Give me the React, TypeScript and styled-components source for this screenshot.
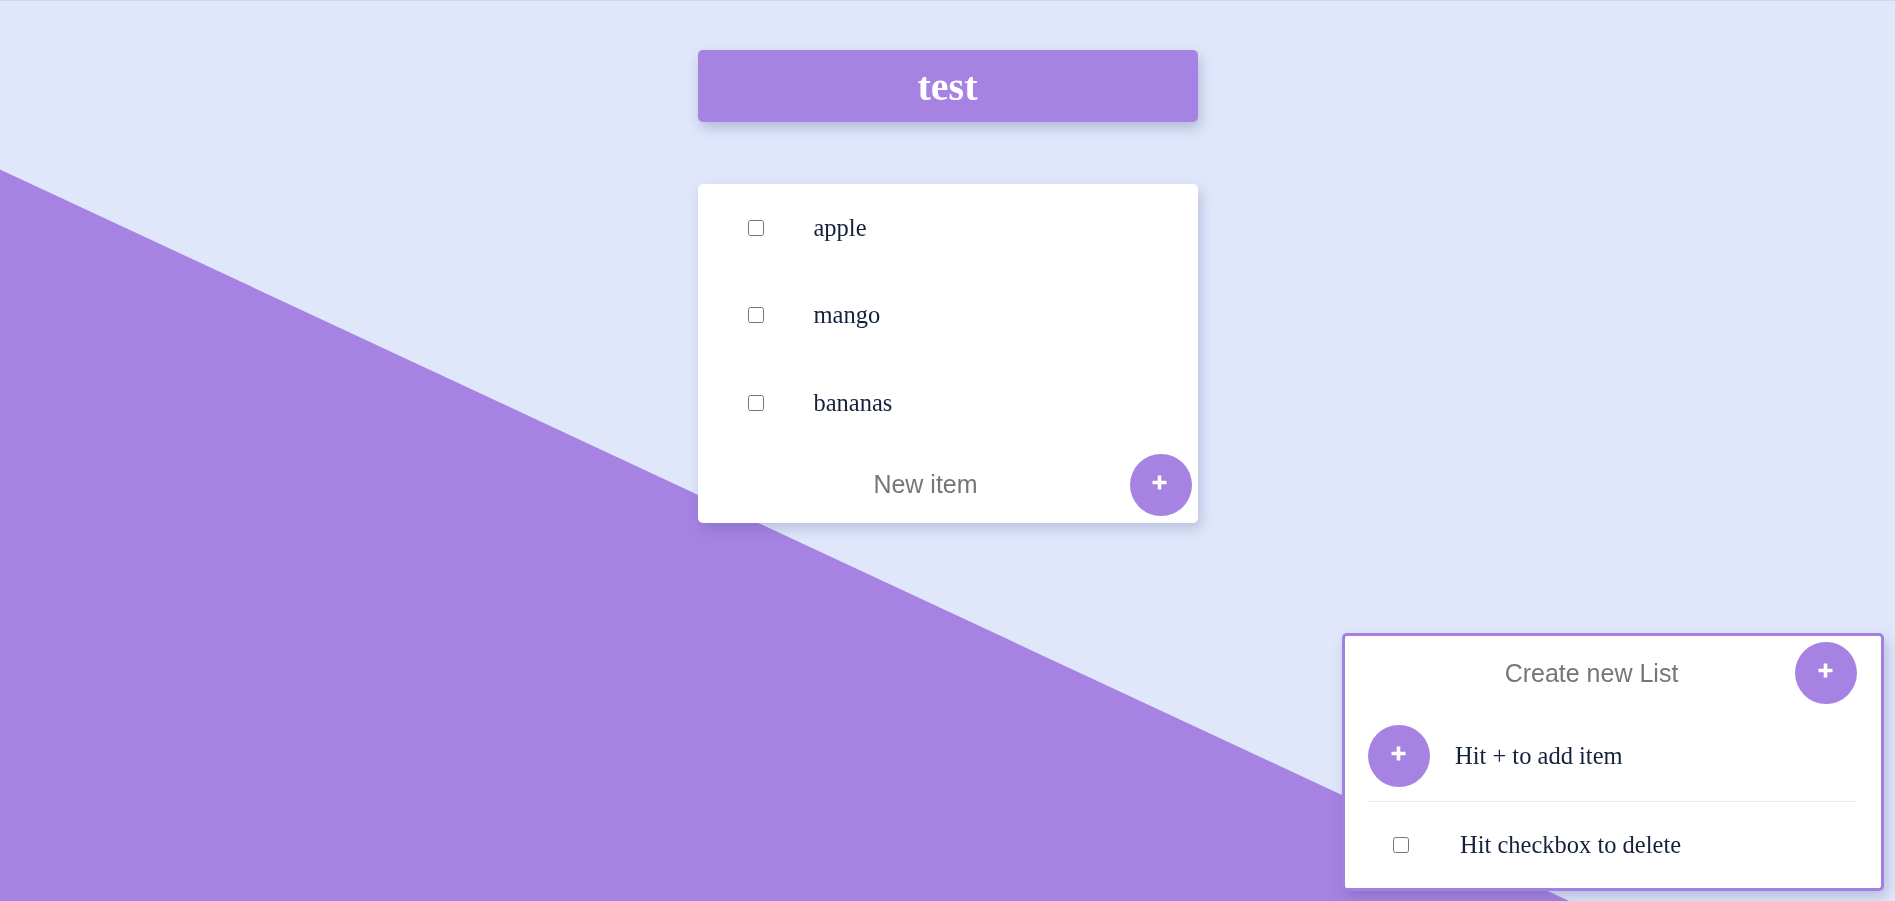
import React from "react";
import styled, { createGlobalStyle } from "styled-components";

const GlobalStyle = createGlobalStyle`
  html, body { margin: 0; padding: 0; }
  body {
    background: #e1e7fb;
    font-family: "Liberation Serif", "Times New Roman", serif;
    color: #14213d;
    overflow: hidden;
  }
  * { box-sizing: border-box; }
`;

const Page = styled.div`
  position: relative;
  min-height: 100vh;
  border-top: 1px solid #cfd6ee;
`;

const Diagonal = styled.div`
  position: fixed;
  inset: 0;
  background: #a683e2;
  clip-path: polygon(0 18.8%, 82.8% 100%, 0 100%);
  z-index: 0;
`;

const Column = styled.main`
  position: relative;
  z-index: 1;
  width: 500px;
  margin: 0 auto;
  padding-top: 49px;
  display: flex;
  flex-direction: column;
  gap: 62px;
`;

const TitleCard = styled.h1`
  margin: 0;
  height: 72px;
  border-radius: 5px;
  background: #a683e2;
  color: #ffffff;
  display: flex;
  align-items: center;
  justify-content: center;
  font-family: "Liberation Serif", "Times New Roman", serif;
  font-weight: bold;
  font-size: 40px;
  box-shadow: 2px 6px 14px rgba(70, 80, 140, 0.3);
`;

const Card = styled.section`
  background: #ffffff;
  border-radius: 5px;
  box-shadow: 3px 6px 14px rgba(70, 80, 140, 0.26);
  display: flex;
  flex-direction: column;
`;

const ItemRow = styled.label`
  height: 87.5px;
  display: flex;
  align-items: center;
  padding-left: 50px;
  gap: 50px;
  font-size: 24.5px;
  color: #14213d;
`;

const Check = styled.input.attrs({ type: "checkbox" })`
  width: 16px;
  height: 16px;
  margin: 0;
  flex: none;
`;

const Footer = styled.div`
  height: 76.5px;
  display: flex;
  align-items: center;
  padding: 0 6px 0 24px;
`;

const TextInput = styled.input<{ $indent?: number }>`
  flex: 1;
  min-width: 0;
  margin-left: ${(p) => p.$indent ?? 0}px;
  border: none;
  outline: none;
  background: transparent;
  text-align: center;
  font-family: "Liberation Sans", Arial, sans-serif;
  font-size: 25px;
  color: #14213d;
  &::placeholder { color: #767676; }
`;

const RoundButton = styled.button`
  flex: none;
  width: 62px;
  height: 62px;
  border-radius: 50%;
  border: none;
  padding: 0 2px 5px 0;
  background: #a683e2;
  color: #ffffff;
  display: flex;
  align-items: center;
  justify-content: center;
  cursor: pointer;
`;

const PlusIcon = () => (
  <svg width="17" height="17" viewBox="0 0 17 17" aria-hidden="true">
    <path d="M8.5 1.5v14M1.5 8.5h14" stroke="#ffffff" strokeWidth="3.6" strokeLinecap="butt" />
  </svg>
);

const HelpPanel = styled.aside`
  position: fixed;
  right: 11px;
  bottom: 10px;
  z-index: 2;
  width: 542px;
  height: 258px;
  background: #ffffff;
  border: 3px solid #a27fe0;
  border-radius: 5px;
  box-shadow: 3px 6px 14px rgba(70, 80, 140, 0.28);
  padding: 6px 24px 0 23px;
  display: flex;
  flex-direction: column;
`;

const HelpHeader = styled.div`
  height: 62px;
  display: flex;
  align-items: center;
`;

const HelpRow = styled.div<{ $divider?: boolean }>`
  display: flex;
  align-items: center;
  font-size: 24.5px;
  color: #14213d;
  ${(p) =>
    p.$divider
      ? `padding: 21px 0 14px; border-bottom: 1px solid #ececf2; gap: 25px;`
      : `flex: 1; padding-left: 25px; gap: 51px;`}
`;

const items = ["apple", "mango", "bananas"];

export default function App() {
  return (
    <Page>
      <GlobalStyle />
      <Diagonal />
      <Column>
        <TitleCard>test</TitleCard>
        <Card>
          {items.map((it) => (
            <ItemRow key={it}>
              <Check />
              <span>{it}</span>
            </ItemRow>
          ))}
          <Footer>
            <TextInput placeholder="New item" />
            <RoundButton aria-label="add item">
              <PlusIcon />
            </RoundButton>
          </Footer>
        </Card>
      </Column>
      <HelpPanel>
        <HelpHeader>
          <TextInput $indent={20} placeholder="Create new List" />
          <RoundButton aria-label="create list">
            <PlusIcon />
          </RoundButton>
        </HelpHeader>
        <HelpRow $divider>
          <RoundButton aria-label="add">
            <PlusIcon />
          </RoundButton>
          <span>Hit + to add item</span>
        </HelpRow>
        <HelpRow>
          <Check />
          <span>Hit checkbox to delete</span>
        </HelpRow>
      </HelpPanel>
    </Page>
  );
}
